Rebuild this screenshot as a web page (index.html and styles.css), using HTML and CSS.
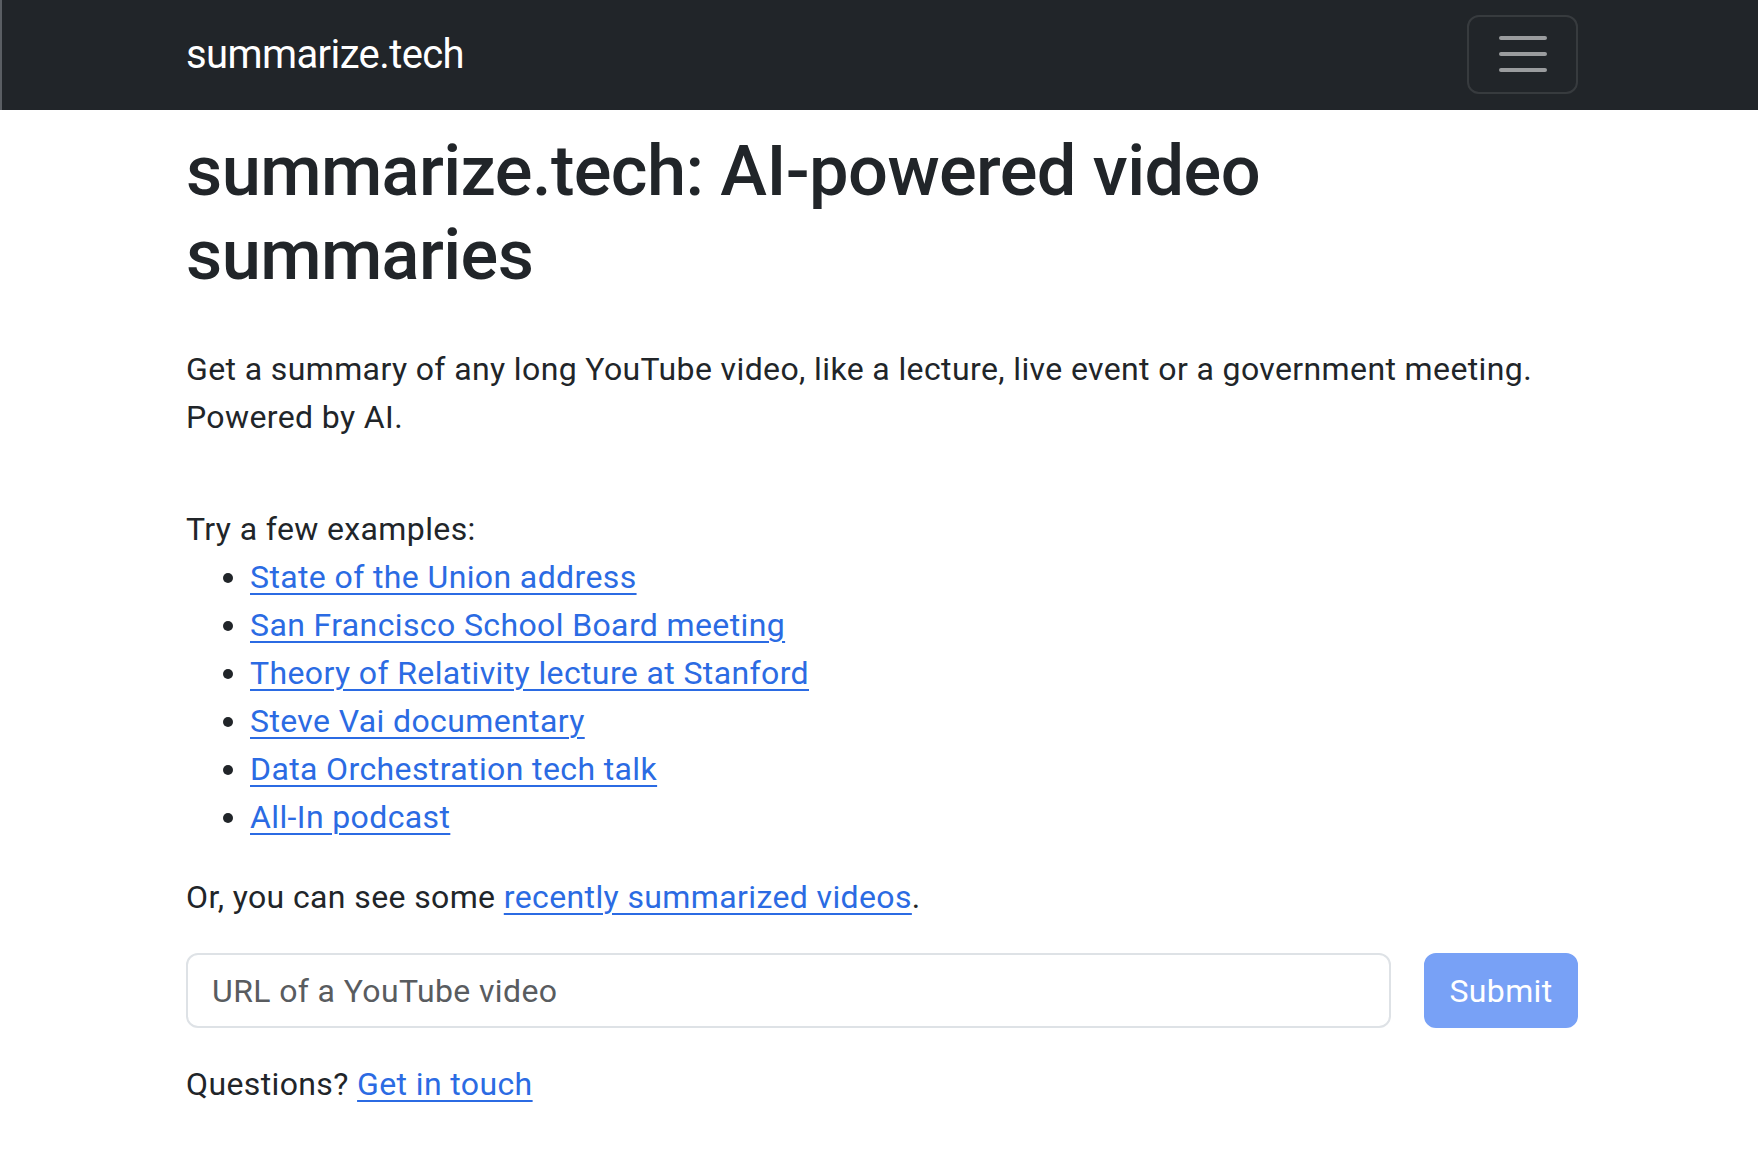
FILE: index.html
```html
<!DOCTYPE html>
<html lang="en">
<head>
<meta charset="utf-8">
<title>summarize.tech: AI-powered video summaries</title>
<link rel="stylesheet" href="styles.css">
</head>
<body>
<nav class="navbar">
  <div class="container nav-inner">
    <a class="brand" href="#">summarize.tech</a>
    <button class="toggler" type="button" aria-label="Toggle navigation">
      <svg class="toggler-icon" viewBox="0 0 30 30" width="60" height="60" aria-hidden="true">
        <path d="M4 7h22M4 15h22M4 23h22" stroke="rgba(255,255,255,0.55)" stroke-width="2" stroke-linecap="round" stroke-miterlimit="10" fill="none"/>
      </svg>
    </button>
  </div>
</nav>
<main class="container main">
  <h1 class="title">summarize.tech: AI-powered video summaries</h1>
  <p class="intro">Get a summary of any long YouTube video, like a lecture, live event or a government meeting. Powered by AI.</p>
  <div class="examples">
    <div>Try a few examples:</div>
    <ul class="example-list">
      <li><a href="#">State of the Union address</a></li>
      <li><a href="#">San Francisco School Board meeting</a></li>
      <li><a href="#">Theory of Relativity lecture at Stanford</a></li>
      <li><a href="#">Steve Vai documentary</a></li>
      <li><a href="#">Data Orchestration tech talk</a></li>
      <li><a href="#">All-In podcast</a></li>
    </ul>
  </div>
  <p class="recent">Or, you can see some <a href="#">recently summarized videos</a>.</p>
  <form class="url-form" onsubmit="return false;">
    <input class="url-input" type="text" placeholder="URL of a YouTube video">
    <button class="submit-btn" type="submit" disabled>Submit</button>
  </form>
  <p class="questions">Questions? <a href="#">Get in touch</a></p>
</main>
</body>
</html>
```
FILE: styles.css
```css
* { box-sizing: border-box; }

html, body {
  margin: 0;
  padding: 0;
  background: #ffffff;
}

body {
  font-family: Roboto, "Noto Sans", "Liberation Sans", sans-serif;
  font-size: 32px;
  line-height: 48px;
  letter-spacing: 0.38px;
  color: #212529;
}

a {
  color: #2b6be3;
  text-decoration: underline;
  text-underline-offset: 5px;
  text-decoration-thickness: 2px;
}

.container {
  width: 100%;
  max-width: 1440px;
  margin: 0 auto;
  padding: 0 24px;
}

.navbar {
  background: #212529;
  height: 110px;
  border-left: 2px solid #5a5e63;
}

.nav-inner {
  height: 100%;
  display: flex;
  align-items: center;
  justify-content: space-between;
}

.brand {
  color: #ffffff;
  text-decoration: none;
  font-size: 40px;
  line-height: 60px;
  letter-spacing: -0.6px;
  margin-left: 2px;
}

.toggler {
  width: 111px;
  height: 79px;
  padding: 0;
  display: flex;
  align-items: center;
  justify-content: center;
  background: transparent;
  border: 2px solid rgba(255, 255, 255, 0.1);
  border-radius: 12px;
  margin-top: -2px;
  margin-right: -2px;
}

.toggler-icon {
  display: block;
}

.main {
  padding: 19px 21px 0 27px;
}

.title {
  font-size: 70.4px;
  font-weight: 500;
  line-height: 84px;
  letter-spacing: -0.6px;
  margin: 0 0 48px;
}

.intro {
  margin: 0 0 64px;
}

.examples {
  margin: 0;
}

.example-list {
  margin: 0 0 32px;
  padding-left: 64px;
}

.recent {
  margin: 0 0 32px;
}

.url-form {
  display: flex;
  gap: 33px;
  margin: 0 0 32px;
}

.url-input {
  flex: 1;
  height: 75px;
  padding: 0 24px;
  font-family: inherit;
  font-size: 32px;
  letter-spacing: 0.38px;
  color: #212529;
  background: #ffffff;
  border: 2px solid #dee2e6;
  border-radius: 12px;
  outline: none;
}

.url-input::placeholder {
  color: #595c5f;
}

.submit-btn {
  width: 154px;
  height: 75px;
  padding: 0;
  font-family: inherit;
  font-size: 32px;
  letter-spacing: 0.38px;
  color: #ffffff;
  background: #78a1f6;
  border: 2px solid #78a1f6;
  border-radius: 12px;
}

.questions {
  margin: 0;
}
```
